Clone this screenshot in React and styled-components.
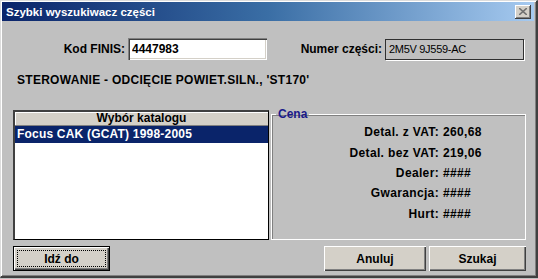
import React, { useState } from 'react'
import styled, { createGlobalStyle } from 'styled-components'

const GlobalStyle = createGlobalStyle`
  html, body {
    margin: 0;
    padding: 0;
    background: #c0c0c0;
  }
  body {
    font-family: "Liberation Sans", Arial, sans-serif;
    font-size: 12px;
  }
`

const prices = [
  { label: 'Detal. z VAT:', value: '260,68' },
  { label: 'Detal. bez VAT:', value: '219,06' },
  { label: 'Dealer:', value: '####' },
  { label: 'Gwarancja:', value: '####' },
  { label: 'Hurt:', value: '####' },
]

export default function App() {
  const [selected, setSelected] = useState(0)
  const catalogs = ['Focus CAK (GCAT) 1998-2005']

  return (
    <>
      <GlobalStyle />
      <Window>
        <TitleBar>
          <Title>Szybki wyszukiwacz części</Title>
          <CloseButton aria-label="close">
            <svg width="8" height="7" viewBox="0 0 8 7">
              <path d="M0 0 L8 7 M8 0 L0 7" stroke="#707070" strokeWidth="1.6" />
            </svg>
          </CloseButton>
        </TitleBar>
        <Body>
          <Fields>
            <FieldLabel>Kod FINIS:</FieldLabel>
            <TextInput defaultValue="4447983" />
            <FieldLabel>Numer części:</FieldLabel>
            <ReadOnlyInput>2M5V 9J559-AC</ReadOnlyInput>
          </Fields>
          <Description>STEROWANIE - ODCIĘCIE POWIET.SILN., 'ST170'</Description>
          <Panels>
            <ListBox>
              <ListHeader>Wybór katalogu</ListHeader>
              {catalogs.map((c, i) => (
                <ListItem key={i} $active={selected === i} onClick={() => setSelected(i)}>
                  {c}
                </ListItem>
              ))}
            </ListBox>
            <Group>
              <Legend>Cena</Legend>
              <PriceGrid>
                {prices.map((p) => (
                  <React.Fragment key={p.label}>
                    <PriceLabel>{p.label}</PriceLabel>
                    <PriceValue>{p.value}</PriceValue>
                  </React.Fragment>
                ))}
              </PriceGrid>
            </Group>
          </Panels>
          <Buttons>
            <Button $default $w={97}>
              <FocusRing>Idź do</FocusRing>
            </Button>
            <Spacer />
            <Button $w={102}>Anuluj</Button>
            <Button $w={97}>Szukaj</Button>
          </Buttons>
        </Body>
      </Window>
    </>
  )
}

const Window = styled.div`
  width: 538px;
  height: 278px;
  box-sizing: border-box;
  background: #c0c0c0;
  border-left: 1px solid #dcdcdc;
  border-top: 1px solid #dcdcdc;
  border-right: 2px solid #404040;
  border-bottom: 2px solid #404040;
  box-shadow: inset 1px 1px #ffffff, inset -1px -1px #808080;
  padding: 1px 2px 0 1px;
  display: flex;
  flex-direction: column;
`

const TitleBar = styled.div`
  height: 19px;
  display: flex;
  align-items: center;
  padding: 0 3px 0 4px;
  background: linear-gradient(to right, #0a246a 0%, #3a6ea5 50%, #a6caf0 100%);
`

const Title = styled.div`
  flex: 1;
  color: #ffffff;
  font-weight: bold;
  font-size: 11.5px;
  white-space: nowrap;
`

const CloseButton = styled.button`
  width: 16px;
  height: 14px;
  padding: 0;
  display: flex;
  align-items: center;
  justify-content: center;
  background: #d4d0c8;
  border: none;
  box-shadow: inset -1px -1px #404040, inset 1px 1px #ffffff, inset -2px -2px #808080;
`

const Body = styled.div`
  flex: 1;
  padding: 0 8px 0 11px;
  display: flex;
  flex-direction: column;
`

const Fields = styled.div`
  margin-top: 16px;
  display: grid;
  grid-template-columns: 112px 139px 112px 139px;
  column-gap: 3px;
  align-items: center;
  height: 23px;
`

const FieldLabel = styled.div`
  text-align: right;
  font-weight: bold;
  white-space: nowrap;
`

const TextInput = styled.input`
  box-sizing: border-box;
  height: 22px;
  margin: 0;
  padding: 0 4px;
  background: #ffffff;
  border: none;
  box-shadow: inset 1px 1px #808080, inset 2px 2px #404040, inset -1px -1px #ffffff, inset -2px -2px #d4d0c8;
  font-family: "Liberation Sans", Arial, sans-serif;
  font-size: 12px;
  font-weight: bold;
  color: #000000;
  outline: none;
`

const ReadOnlyInput = styled.div`
  box-sizing: border-box;
  height: 21px;
  margin-top: 1px;
  padding: 0 3px;
  display: flex;
  align-items: center;
  background: #c0c0c0;
  border: 1px solid #303030;
  box-shadow: 1px 1px #ffffff;
  font-size: 11px;
  letter-spacing: -0.3px;
  color: #000000;
`

const Description = styled.div`
  margin: 13px 0 0 4px;
  font-weight: bold;
  line-height: 15px;
  letter-spacing: 0.28px;
  white-space: nowrap;
`

const Panels = styled.div`
  margin-top: 20px;
  display: grid;
  grid-template-columns: 256px 255px;
  column-gap: 2px;
  height: 132px;
`

const ListBox = styled.div`
  margin-top: 2px;
  height: 130px;
  box-sizing: border-box;
  background: #ffffff;
  border-top: 2px solid #404040;
  border-left: 2px solid #404040;
  border-right: 1px solid #000000;
  border-bottom: 1px solid #000000;
  display: flex;
  flex-direction: column;
`

const ListHeader = styled.div`
  height: 13px;
  line-height: 13px;
  text-align: center;
  font-weight: bold;
  background: #d4d0c8;
  border-bottom: 1px solid #808080;
  box-shadow: inset 1px 1px #ffffff;
`

const ListItem = styled.div`
  height: 17px;
  line-height: 17px;
  padding-left: 2px;
  font-weight: bold;
  letter-spacing: 0.2px;
  color: ${(p) => (p.$active ? '#ffffff' : '#000000')};
  background: ${(p) => (p.$active ? '#0a246a' : 'transparent')};
  cursor: default;
`

const Group = styled.fieldset`
  margin: 0;
  padding: 0;
  min-width: 0;
  height: 132px;
  box-sizing: border-box;
  border: 1px solid #ffffff;
  box-shadow: inset 1px 1px #808080;
`

const Legend = styled.legend`
  margin-left: 4px;
  padding: 0 2px;
  font-weight: bold;
  color: #1a1a8a;
  line-height: 12px;
`

const PriceGrid = styled.div`
  margin-top: 2px;
  display: grid;
  grid-template-columns: 167px auto;
  column-gap: 4px;
  grid-auto-rows: 20.4px;
  align-items: center;
`

const PriceLabel = styled.div`
  text-align: right;
  font-weight: bold;
  letter-spacing: 0.35px;
  white-space: nowrap;
`

const PriceValue = styled.div`
  font-weight: bold;
  letter-spacing: 0.35px;
  white-space: nowrap;
`

const Buttons = styled.div`
  margin-top: 6px;
  display: flex;
  gap: 3px;
  height: 25px;
`

const Spacer = styled.div`
  flex: 1;
`

const Button = styled.button`
  width: ${(p) => p.$w}px;
  height: 25px;
  margin: 0;
  padding: ${(p) => (p.$default ? '3px' : '0')};
  background: #d4d0c8;
  border: ${(p) => (p.$default ? '1px solid #000000' : 'none')};
  box-shadow: inset 1px 1px #ffffff, inset -1px -1px #404040, inset -2px -2px #808080;
  font-family: "Liberation Sans", Arial, sans-serif;
  font-size: 12px;
  font-weight: bold;
  color: #000000;
`

const FocusRing = styled.div`
  height: 100%;
  box-sizing: border-box;
  display: flex;
  align-items: center;
  justify-content: center;
  border: 1px dotted #000000;
`
